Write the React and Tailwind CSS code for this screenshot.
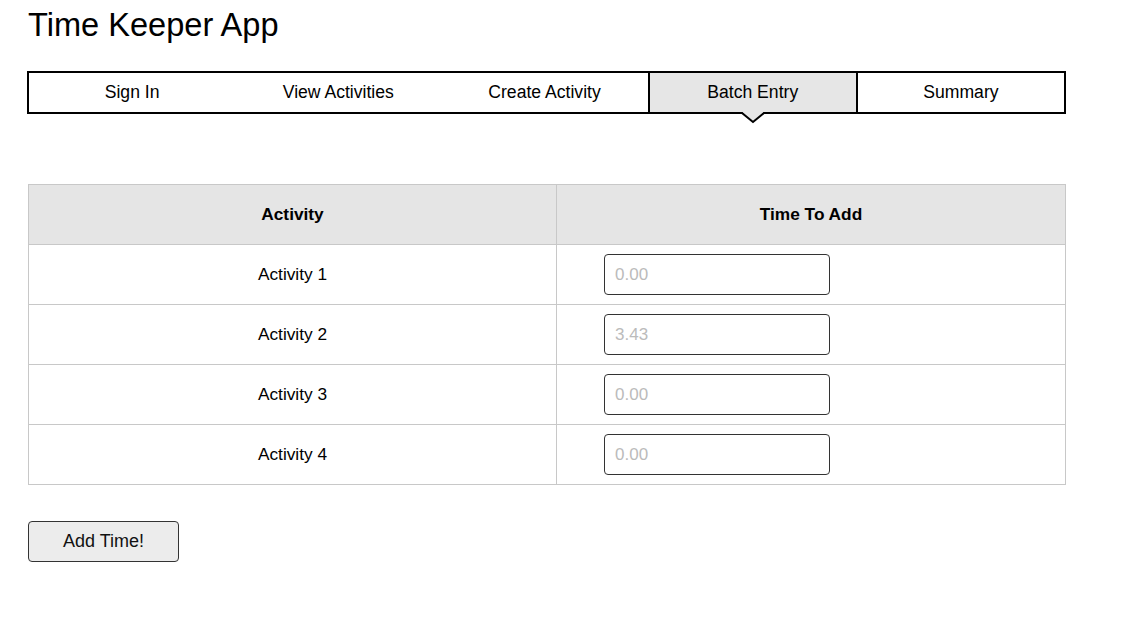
import React from "react";

const tabs = ["Sign In", "View Activities", "Create Activity", "Batch Entry", "Summary"];
const activities = [
  { name: "Activity 1", value: "0.00" },
  { name: "Activity 2", value: "3.43" },
  { name: "Activity 3", value: "0.00" },
  { name: "Activity 4", value: "0.00" },
];

const App = () => {
  return (
    <div className="min-h-screen bg-white pl-[28px] pt-[6px] text-black font-['Liberation_Sans',Arial,sans-serif]">
      <h1 className="text-[32.6px] leading-[37px] font-normal">Time Keeper App</h1>

      <div className="-ml-px mt-[28px] flex h-[43px] w-[1039px] border-2 border-black">
        {tabs.map((tab) => {
          const active = tab === "Batch Entry";
          return active ? (
            <div
              key={tab}
              className="relative flex flex-1 items-center justify-center border-x-2 border-black bg-[#e6e6e6] text-[17.6px]"
            >
              {tab}
              <svg
                className="absolute left-1/2 top-full -translate-x-1/2"
                width="28"
                height="12"
                viewBox="0 0 28 12"
              >
                <polygon points="3,0 25,0 14,10" fill="#e6e6e6" />
                <polyline
                  points="0,1 3,1 14,10 25,1 28,1"
                  fill="none"
                  stroke="#000"
                  strokeWidth="2"
                />
              </svg>
            </div>
          ) : (
            <div key={tab} className="flex flex-1 items-center justify-center text-[17.6px]">
              {tab}
            </div>
          );
        })}
      </div>

      <table className="mt-[70px] w-[1038px] border-collapse border border-[#c8c8c8] text-[17.3px]">
        <thead>
          <tr className="h-[60px] bg-[#e5e5e5]">
            <th className="w-[528px] border border-[#c8c8c8] font-bold">Activity</th>
            <th className="border border-[#c8c8c8] font-bold">Time To Add</th>
          </tr>
        </thead>
        <tbody>
          {activities.map((a) => (
            <tr key={a.name} className="h-[60px]">
              <td className="border border-[#c8c8c8] text-center">{a.name}</td>
              <td className="border border-[#c8c8c8] pl-[47px]">
                <input
                  type="text"
                  placeholder={a.value}
                  className="block h-[41px] w-[226px] rounded-[4px] border border-[#333] px-[10px] text-[17px] placeholder:text-[#bbb] outline-none"
                />
              </td>
            </tr>
          ))}
        </tbody>
      </table>

      <button className="mt-[36px] h-[41px] w-[151px] rounded-[4px] border border-[#333] bg-[#ececec] text-[18px] text-[#111]">
        Add Time!
      </button>
    </div>
  );
};

export default App;
